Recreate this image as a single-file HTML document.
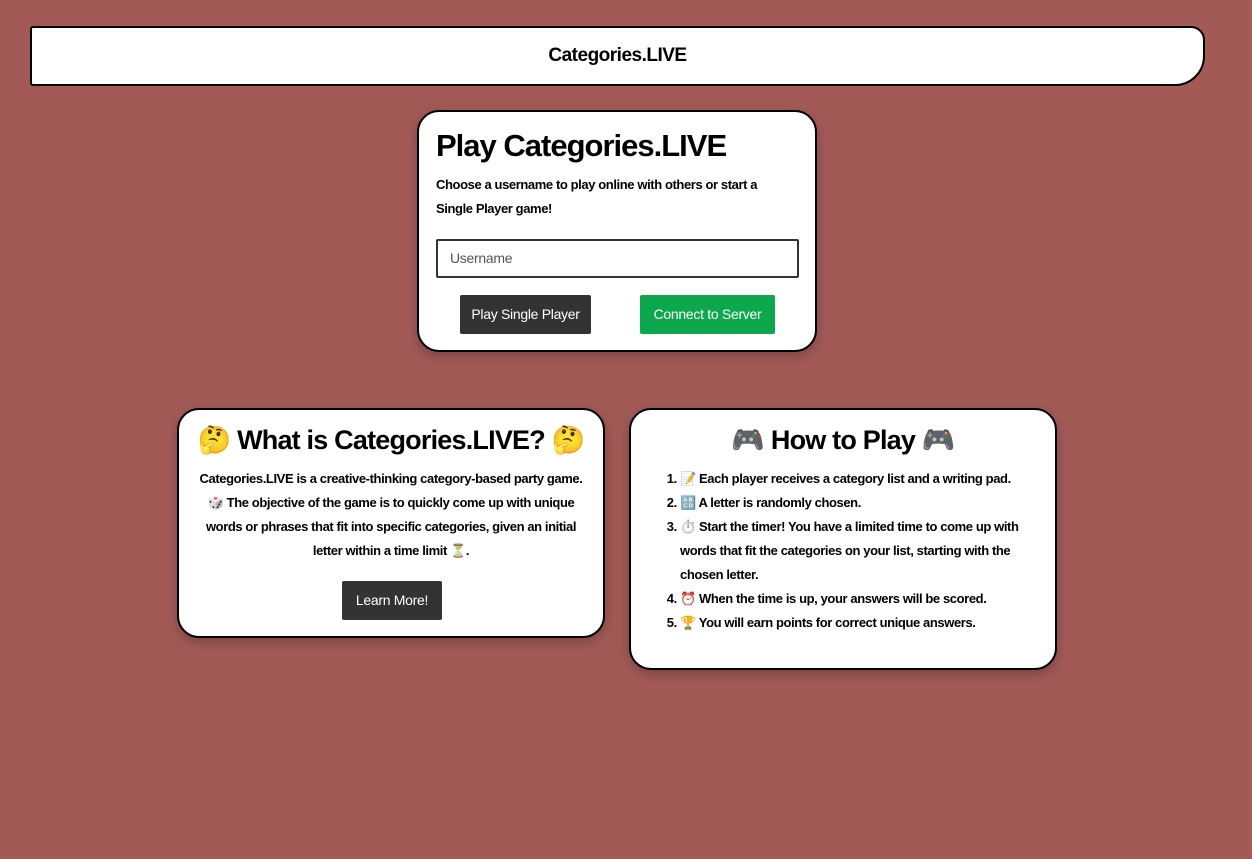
<!DOCTYPE html>
<html><head><meta charset="utf-8"><style>
*{box-sizing:border-box;margin:0;padding:0}
body{width:1252px;height:859px;background:#a35a57;font-family:"Liberation Sans","Noto Sans CJK JP",sans-serif;position:relative;overflow:hidden;color:#000}
.hdr{position:absolute;left:30px;top:26px;width:1175px;height:60px;background:#fff;border:2px solid #000;border-radius:3px 14px 30px 3px;text-align:center;font-weight:bold;font-size:19px;line-height:55px;letter-spacing:-0.5px}
.card{position:absolute;background:#fff;border:2px solid #000;border-radius:22px;box-shadow:0 4px 12px rgba(0,0,0,.25)}
h1{font-size:31px;letter-spacing:-1px;font-weight:bold}
h2{font-size:27px;letter-spacing:-0.8px;font-weight:bold;text-align:center}
p,li{font-size:13px;font-weight:bold;line-height:24px;letter-spacing:-0.4px}
.btn{position:absolute;height:39px;color:#fff;font-size:14px;line-height:38px;text-align:center;border-radius:2px;letter-spacing:-0.3px}
ol{padding-left:49px}
</style></head><body>
<div class="hdr">Categories.LIVE</div>
<div class="card" style="left:417px;top:110px;width:400px;height:242px">
<h1 style="position:absolute;left:17px;top:16px">Play Categories.LIVE</h1>
<p style="position:absolute;left:17px;top:61px;width:350px">Choose a username to play online with others or start a Single Player game!</p>
<div style="position:absolute;left:17px;top:127px;width:363px;height:39px;border:2px solid #333;border-radius:2px;font-size:14px;color:#555;padding-left:12px;line-height:34px;letter-spacing:-0.3px">Username</div>
<div class="btn" style="left:41px;top:183px;width:131px;background:#333">Play Single Player</div>
<div class="btn" style="left:221px;top:183px;width:135px;background:#0da84d">Connect to Server</div>
</div>
<div class="card" style="left:177px;top:408px;width:428px;height:230px">
<h2 style="margin-top:14px">🤔 What is Categories.LIVE? 🤔</h2>
<p style="text-align:center;padding:0 14px;margin-top:11px">Categories.LIVE is a creative-thinking category-based party game. 🎲 The objective of the game is to quickly come up with unique words or phrases that fit into specific categories, given an initial letter within a time limit ⏳.</p>
<div class="btn" style="left:163px;top:171px;width:100px;background:#333">Learn More!</div>
</div>
<div class="card" style="left:629px;top:408px;width:428px;height:262px">
<h2 style="margin-top:14px">🎮 How to Play 🎮</h2>
<ol style="margin-top:11px;padding-right:18px">
<li>📝 Each player receives a category list and a writing pad.</li>
<li>🔠 A letter is randomly chosen.</li>
<li>⏱️ Start the timer! You have a limited time to come up with words that fit the categories on your list, starting with the chosen letter.</li>
<li>⏰ When the time is up, your answers will be scored.</li>
<li>🏆 You will earn points for correct unique answers.</li>
</ol>
</div>
</body></html>
